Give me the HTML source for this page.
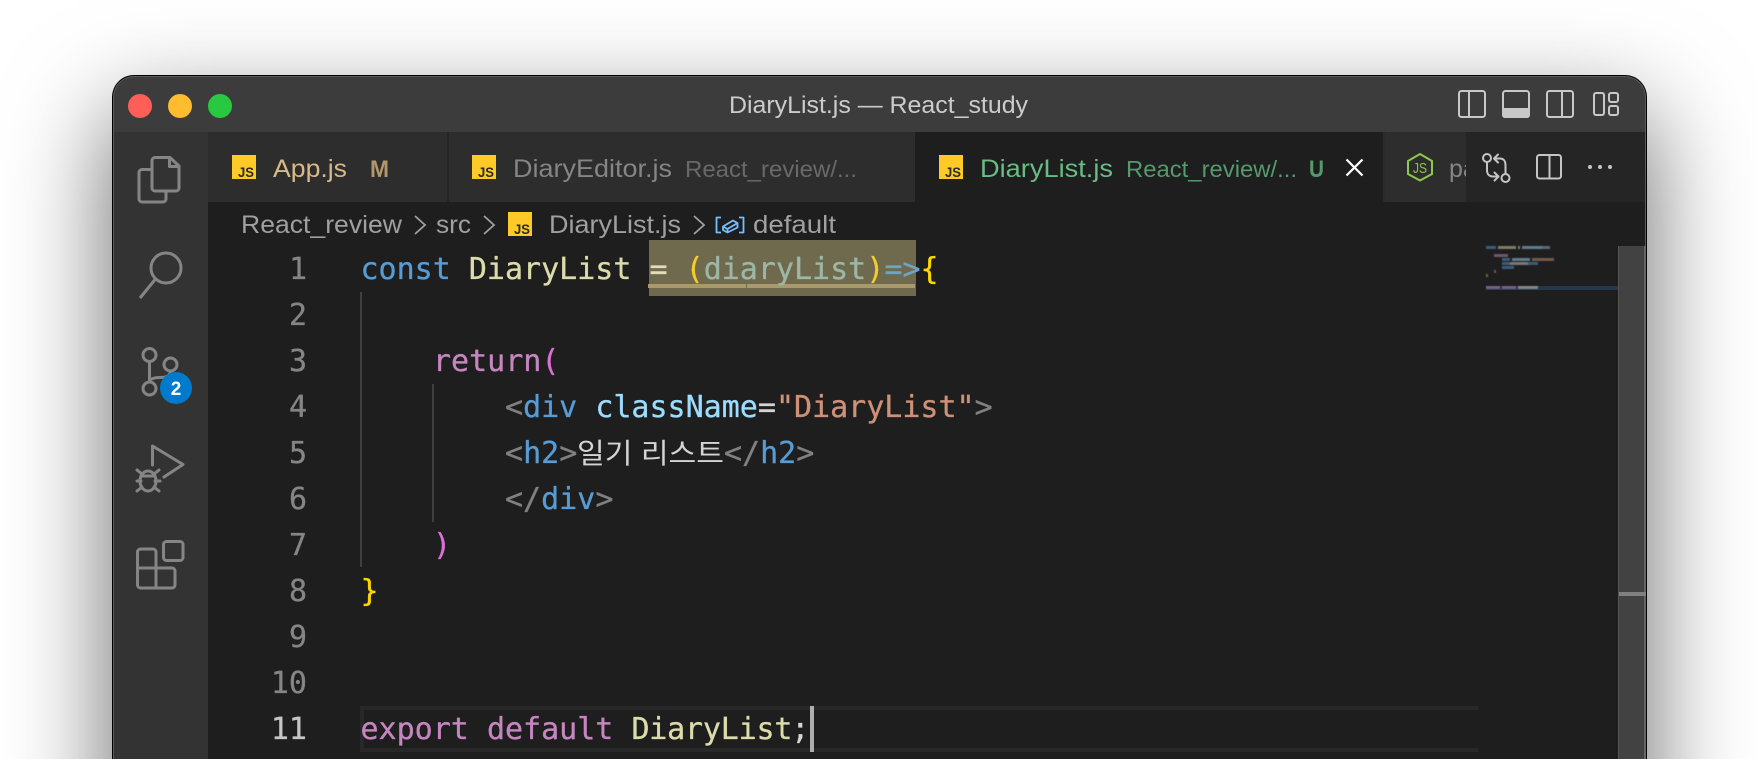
<!DOCTYPE html>
<html><head><meta charset="utf-8"><title>DiaryList.js</title>
<style>
html,body{margin:0;padding:0;background:#fff;width:1758px;height:759px;overflow:hidden}
#root{position:relative;width:1758px;height:759px;overflow:hidden;background:#fff}
#sh{position:absolute;left:212px;top:115px;width:1335px;height:644px;box-shadow:0 100px 95px 100px rgba(0,0,0,.6)}
svg{position:absolute;left:0;top:0;display:block}
.ui{font-family:"Liberation Sans",sans-serif}
.m{font-family:"DejaVu Sans Mono","Liberation Mono",monospace;font-size:30px;white-space:pre;stroke-width:.3px}
.js{font-family:"Liberation Sans",sans-serif;font-size:14px;font-weight:700;fill:#2b2b2b}
.kw{fill:#569cd6;stroke:#569cd6}.fn{fill:#dcdcaa;stroke:#dcdcaa}.pl{fill:#d4d4d4;stroke:#d4d4d4}
.ctl{fill:#c586c0;stroke:#c586c0}.pk{fill:#da70d6;stroke:#da70d6}.gr{fill:#808080;stroke:#808080}
.at{fill:#9cdcfe;stroke:#9cdcfe}.st{fill:#ce9178;stroke:#ce9178}.ye{fill:#ffd700;stroke:#ffd700}
.ln{fill:#858585;stroke:#858585}
</style></head><body>
<div id="root">
<div id="sh"></div>
<svg width="1758" height="759" viewBox="0 0 1758 759" xmlns="http://www.w3.org/2000/svg">
<defs>
<clipPath id="pk"><rect x="1383" y="132" width="83" height="70"/></clipPath>
<filter id="bl" x="-5%" y="-5%" width="110%" height="110%"><feGaussianBlur stdDeviation=".6"/></filter>
</defs>
<path d="M134 75H1625a22 22 0 0 1 22 22V759H112V97a22 22 0 0 1 22-22Z" fill="#000"/>
<path d="M134 76H1625a21 21 0 0 1 21 21V759H113V97a21 21 0 0 1 21-21Z" fill="#5c5c5c"/>
<path d="M134 77H1625a20 20 0 0 1 20 20V759H114V97a20 20 0 0 1 20-20Z" fill="#3c3c3c"/>
<rect x="114" y="132" width="94" height="627" fill="#333"/>
<rect x="208" y="132" width="1437" height="70" fill="#2d2d2d"/>
<rect x="447" y="132" width="2" height="70" fill="#252525"/>
<rect x="915" y="132" width="468" height="70" fill="#1e1e1e"/>
<rect x="1383" y="132" width="2" height="70" fill="#2a2a2a"/>
<rect x="1466" y="132" width="179" height="70" fill="#252526"/>
<rect x="208" y="202" width="1437" height="557" fill="#1e1e1e"/>

<!-- traffic lights -->
<circle cx="140" cy="106" r="12" fill="#ff5f57"/>
<circle cx="180" cy="106" r="12" fill="#febc2e"/>
<circle cx="220" cy="106" r="12" fill="#28c840"/>
<text class="ui" x="729" y="113" font-size="24" fill="#cccccc" textLength="299" lengthAdjust="spacingAndGlyphs">DiaryList.js — React_study</text>

<!-- layout icons -->
<g fill="none" stroke="#c8c8c8" stroke-width="2">
<rect x="1459" y="91" width="26" height="26" rx="2.500"/><path d="M1469 91V117"/>
<rect x="1503" y="91" width="26" height="26" rx="2.500"/>
<rect x="1547" y="91" width="26" height="26" rx="2.500"/><path d="M1562 91V117"/>
<rect x="1594" y="93" width="10" height="22" rx="2"/>
<rect x="1609" y="93" width="9" height="9" rx="2"/><rect x="1609" y="106" width="9" height="9" rx="2"/>
</g>
<path d="M1502 108H1530V115a3 3 0 0 1-3 3H1505a3 3 0 0 1-3-3Z" fill="#c8c8c8"/>

<!-- activity bar -->
<g fill="none" stroke="#858585" stroke-width="3" stroke-linejoin="round" stroke-linecap="round">
<path d="M170 157.500H155a3 3 0 0 0-3 3V188a3 3 0 0 0 3 3H176a3 3 0 0 0 3-3V166Z"/>
<path d="M169.500 158V166.500H178.500"/>
<path d="M152 169.500H142a3 3 0 0 0-3 3V199a3 3 0 0 0 3 3H163a3 3 0 0 0 3-3V191"/>
<circle cx="166" cy="268" r="15"/><path d="M155.500 279L140 298" stroke-linecap="butt"/>
<circle cx="149.500" cy="355" r="6.500"/><circle cx="149.500" cy="388.500" r="6.500"/><circle cx="170.500" cy="364.500" r="6.500"/>
<path d="M149.500 361.500V382M170.500 371C170.500 376 166 377.500 160 377.500C154 377.500 149.500 379 149.500 382" />
<path d="M152.500 465V446L183 464.500L164 477"/>
<ellipse cx="148" cy="481" rx="8" ry="10"/>
<path d="M141 476H155M137 470L142 474M159 470L154 474M137 481H141M155 481H160M137 491L142 487M159 491L154 487"/>
<rect x="163.500" y="541.500" width="19.500" height="19" rx="3"/>
<path d="M156 568V552a3 3 0 0 0-3-3H140.500a3 3 0 0 0-3 3V585a3 3 0 0 0 3 3H172a3 3 0 0 0 3-3V571a3 3 0 0 0-3-3H137.500M156 568V588"/>
</g>
<circle cx="176" cy="388" r="16" fill="#007acc"/>
<text class="ui" x="176" y="395" font-size="19" font-weight="700" fill="#fff" text-anchor="middle">2</text>

<!-- tabs -->
<rect x="232" y="155" width="24" height="24" fill="#ffca28"/><text class="js" x="238" y="177" textLength="16" lengthAdjust="spacingAndGlyphs">JS</text>
<text class="ui" x="273" y="177" font-size="25" fill="#d8b988" textLength="74" lengthAdjust="spacingAndGlyphs">App.js</text>
<text class="ui" x="370" y="177" font-size="24" font-weight="700" fill="#b3976c" textLength="19" lengthAdjust="spacingAndGlyphs">M</text>

<rect x="472" y="155" width="24" height="24" fill="#ffca28"/><text class="js" x="478" y="177" textLength="16" lengthAdjust="spacingAndGlyphs">JS</text>
<text class="ui" x="513" y="177" font-size="25" fill="#858585" textLength="159" lengthAdjust="spacingAndGlyphs">DiaryEditor.js</text>
<text class="ui" x="685" y="177" font-size="23" fill="#696969" textLength="172" lengthAdjust="spacingAndGlyphs">React_review/...</text>

<rect x="939" y="155" width="24" height="24" fill="#ffca28"/><text class="js" x="945" y="177" textLength="16" lengthAdjust="spacingAndGlyphs">JS</text>
<text class="ui" x="980" y="177" font-size="25" fill="#68bd86" textLength="133" lengthAdjust="spacingAndGlyphs">DiaryList.js</text>
<text class="ui" x="1126" y="177" font-size="23" fill="#559a6d" textLength="171" lengthAdjust="spacingAndGlyphs">React_review/...</text>
<text class="ui" x="1309" y="177" font-size="24" font-weight="700" fill="#559a6d" textLength="15" lengthAdjust="spacingAndGlyphs">U</text>
<path d="M1346.500 159.500L1362.500 175.500M1362.500 159.500L1346.500 175.500" stroke="#fff" stroke-width="2.200" fill="none"/>

<path d="M1420 154L1432 161V174L1420 180.500L1408 174V161Z" fill="none" stroke="#8cc84b" stroke-width="2"/>
<text class="ui" x="1413" y="173" font-size="15" fill="#8cc84b" textLength="14" lengthAdjust="spacingAndGlyphs">JS</text>
<g clip-path="url(#pk)"><text class="ui" x="1449" y="177" font-size="25" fill="#858585">pa</text></g>
<rect x="1466" y="132" width="179" height="70" fill="#252526"/>

<!-- toolbar icons -->
<g fill="none" stroke="#c5c5c5" stroke-width="2" stroke-linecap="round" stroke-linejoin="round">
<circle cx="1487" cy="158" r="4"/><circle cx="1505.500" cy="178" r="4"/>
<path d="M1487 162.500V170C1487 174 1489 176.500 1493 176.500H1498M1494.500 172.500L1498.500 176.500L1494.500 180.500"/>
<path d="M1505.500 173.500V165C1505.500 161 1503.500 158.500 1500 158.500H1494.500M1498 154.500L1494 158.500L1498 162.500"/>
<rect x="1537" y="155" width="24" height="23.500" rx="2.500"/><path d="M1549.500 155V178.500"/>
</g>
<circle cx="1590" cy="167" r="2" fill="#c5c5c5"/><circle cx="1600" cy="167" r="2" fill="#c5c5c5"/><circle cx="1610" cy="167" r="2" fill="#c5c5c5"/>

<!-- breadcrumbs -->
<g class="ui" font-size="25" fill="#a0a0a0">
<text x="241" y="233" textLength="161" lengthAdjust="spacingAndGlyphs">React_review</text>
<text x="436" y="233" textLength="35" lengthAdjust="spacingAndGlyphs">src</text>
<text x="549" y="233" textLength="132" lengthAdjust="spacingAndGlyphs">DiaryList.js</text>
<text x="753" y="233" textLength="83" lengthAdjust="spacingAndGlyphs">default</text>
</g>
<g fill="none" stroke="#a0a0a0" stroke-width="1.800">
<path d="M415 216L425 225L415 234M484 216L494 225L484 234M694 216L704 225L694 234"/>
</g>
<rect x="508" y="212" width="24" height="24" fill="#ffca28"/><text class="js" x="514" y="234" textLength="16" lengthAdjust="spacingAndGlyphs">JS</text>
<g fill="none" stroke="#75beff" stroke-width="1.800" stroke-linejoin="round">
<path d="M721 217.500H716.500V232.500H721M739 217.500H743.500V232.500H739"/>
<path d="M723 226.500L733 220.500L737.500 223V227.500L727.500 232.500L723 230ZM723 226.500L727.500 229L737.500 223M727.500 229V232.500"/>
</g>

<!-- selection / highlights -->
<rect x="649" y="240" width="267" height="56" fill="#6f6a4e"/>
<rect x="648" y="284" width="98" height="4" fill="#a89a6d"/><rect x="747" y="284" width="168" height="4" fill="#a89a6d"/>
<path d="M362 708H1478M362 750H1478M362 706V752" stroke="#282828" stroke-width="4" fill="none"/>
<rect x="360" y="292" width="2" height="275" fill="#404040"/>
<rect x="432" y="384" width="2" height="138" fill="#404040"/>

<!-- line numbers -->
<g class="m" text-anchor="end">
<text class="ln" x="307" y="279">1</text><text class="ln" x="307" y="325">2</text><text class="ln" x="307" y="371">3</text><text class="ln" x="307" y="417">4</text><text class="ln" x="307" y="463">5</text><text class="ln" x="307" y="509">6</text><text class="ln" x="307" y="555">7</text><text class="ln" x="307" y="601">8</text><text class="ln" x="307" y="647">9</text><text class="ln" x="307" y="693">10</text><text x="307" y="739" fill="#c6c6c6" stroke="#c6c6c6">11</text>
</g>

<!-- code -->
<text class="m" xml:space="preserve" x="360.500" y="279"><tspan class="kw">const</tspan> <tspan class="fn">DiaryList</tspan> <tspan fill="#e2dcbc" stroke="#e2dcbc">=</tspan> <tspan fill="#f3cd2c" stroke="#f3cd2c">(</tspan><tspan fill="#9db7a6" stroke="#9db7a6">diaryList</tspan><tspan fill="#f3cd2c" stroke="#f3cd2c">)</tspan><tspan fill="#6fa3bf" stroke="#6fa3bf">=&gt;</tspan><tspan class="ye">{</tspan></text>
<text class="m" xml:space="preserve" x="433" y="371"><tspan class="ctl">return</tspan><tspan class="pk">(</tspan></text>
<text class="m" xml:space="preserve" x="505" y="417"><tspan class="gr">&lt;</tspan><tspan class="kw">div</tspan> <tspan class="at">className</tspan><tspan class="pl">=</tspan><tspan class="st">"DiaryList"</tspan><tspan class="gr">&gt;</tspan></text>
<text class="m" xml:space="preserve" x="505" y="463"><tspan class="gr">&lt;</tspan><tspan class="kw">h2</tspan><tspan class="gr">&gt;</tspan></text>
<text x="577" y="463" font-family="'Liberation Sans','Noto Sans CJK KR',sans-serif" font-size="28" fill="#d4d4d4" textLength="147" lengthAdjust="spacingAndGlyphs">일기 리스트</text>
<text class="m" xml:space="preserve" x="724" y="463"><tspan class="gr">&lt;/</tspan><tspan class="kw">h2</tspan><tspan class="gr">&gt;</tspan></text>
<text class="m" xml:space="preserve" x="505" y="509"><tspan class="gr">&lt;/</tspan><tspan class="kw">div</tspan><tspan class="gr">&gt;</tspan></text>
<text class="m pk" x="433" y="555">)</text>
<text class="m ye" x="360.500" y="601">}</text>
<text class="m" xml:space="preserve" x="360.500" y="739"><tspan class="ctl">export</tspan> <tspan class="ctl">default</tspan> <tspan class="fn" letter-spacing="-.2">DiaryList</tspan><tspan class="pl" dx="-1">;</tspan></text>
<rect x="810" y="706" width="4" height="46" fill="#aeafad"/>

<!-- minimap -->
<rect x="1486" y="286" width="132" height="4" fill="#24384d"/>
<g opacity=".5" filter="url(#bl)">
<rect x="1486" y="246" width="10" height="3" fill="#569cd6"/><rect x="1498" y="246" width="18" height="3" fill="#dcdcaa"/><rect x="1518" y="246" width="2" height="3" fill="#d4d4d4"/><rect x="1522" y="246" width="20" height="3" fill="#9cdcfe"/><rect x="1542" y="246" width="8" height="3" fill="#8fb5c9"/>
<rect x="1494" y="254" width="14" height="3" fill="#c586c0"/>
<rect x="1502" y="258" width="8" height="3" fill="#569cd6"/><rect x="1512" y="258" width="18" height="3" fill="#9cdcfe"/><rect x="1532" y="258" width="22" height="3" fill="#ce9178"/>
<rect x="1502" y="262" width="8" height="3" fill="#569cd6"/><rect x="1510" y="262" width="18" height="3" fill="#d4d4d4"/><rect x="1528" y="262" width="10" height="3" fill="#569cd6"/>
<rect x="1502" y="266" width="12" height="3" fill="#569cd6"/>
<rect x="1494" y="270" width="2" height="3" fill="#da70d6"/>
<rect x="1486" y="274" width="2" height="3" fill="#c9b030"/>
<rect x="1486" y="286" width="14" height="3" fill="#c586c0"/><rect x="1502" y="286" width="14" height="3" fill="#c586c0"/><rect x="1518" y="286" width="20" height="3" fill="#dcdcaa"/>
</g>

<!-- scrollbar -->
<rect x="1618" y="246" width="27" height="513" fill="#424242"/>
<rect x="1618" y="246" width="1" height="513" fill="#555"/>
<rect x="1644" y="246" width="2" height="513" fill="#666"/>
<rect x="1619" y="592" width="27" height="4" fill="#808080"/>
</svg>
</div>
</body></html>
